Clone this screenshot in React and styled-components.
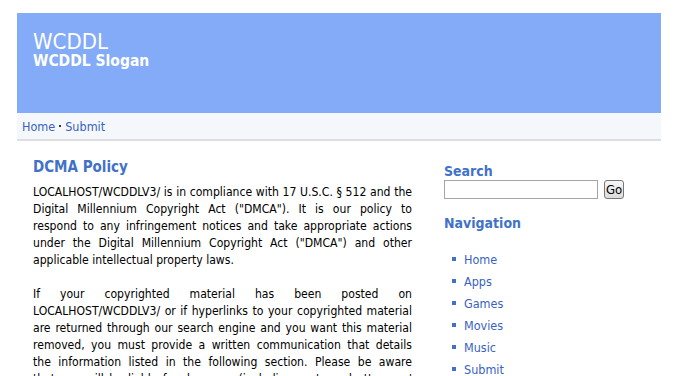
import styled, { createGlobalStyle } from "styled-components";

const GlobalStyle = createGlobalStyle`
  body {
    margin: 0;
    background: #fff;
    font-family: "DejaVu Sans Condensed", "DejaVu Sans", sans-serif;
    font-size: 12px;
    color: #000;
  }
`;

const Page = styled.div`
  width: 644px;
  margin: 13px 0 0 17px;
`;

const Header = styled.header`
  height: 100px;
  background: #84abf7;
  padding: 18px 16px 0;
  box-sizing: border-box;
  color: #fff;
`;

const SiteName = styled.div`
  font-size: 22px;
  line-height: 21px;
`;

const Slogan = styled.div`
  font-size: 15.5px;
  font-weight: bold;
  line-height: 18px;
`;

const NavBar = styled.nav`
  height: 26px;
  background: #f4f8fc;
  border-bottom: 2px solid #dedede;
  display: flex;
  align-items: center;
  padding-left: 5px;
  font-size: 12.5px;
`;

const NavLink = styled.a`
  color: #3a62c0;
  text-decoration: none;
`;

const Dot = styled.span`
  display: inline-block;
  width: 2px;
  height: 2px;
  background: #333;
  margin: 0 4px;
  vertical-align: middle;
`;

const Body = styled.div`
  display: flex;
  padding: 17px 0 0 16px;
  gap: 32px;
`;

const Main = styled.main`
  width: 379px;
`;

const Title = styled.h2`
  margin: 0 0 8px;
  font-size: 15px;
  font-weight: bold;
  color: #4272c8;
  line-height: 18px;
`;

const Para = styled.p`
  margin: 0 0 17px;
  line-height: 17px;
  font-size: 12.1px;
`;

// one justified line of the paragraph; the last line stays ragged
const Line = styled.span`
  display: block;
  white-space: nowrap;
  text-align: ${(p) => (p.$last ? "left" : "justify")};
  text-align-last: ${(p) => (p.$last ? "left" : "justify")};
`;

const Sidebar = styled.aside`
  flex: 1;
  padding-top: 5px;
`;

const SideTitle = styled.h3`
  margin: 0 0 1px;
  font-size: 14px;
  font-weight: bold;
  color: #4272c8;
  line-height: 16px;
`;

const SearchRow = styled.form`
  display: flex;
  align-items: center;
  gap: 6px;
  margin-bottom: 16px;
`;

const SearchInput = styled.input`
  width: 154px;
  height: 19px;
  box-sizing: border-box;
  border: 1px solid #a5a5a5;
  padding: 0 2px;
`;

const GoButton = styled.button`
  height: 19px;
  padding: 0 1px;
  font-family: "DejaVu Sans Condensed", sans-serif;
  font-size: 13px;
  border: 1px solid #777;
  border-radius: 3px;
  background: linear-gradient(#f6f6f6, #dcdcdc);
`;

const NavList = styled.ul`
  list-style: none;
  margin: 17px 0 0;
  padding: 0 0 0 8px;
`;

const NavItem = styled.li`
  display: flex;
  align-items: center;
  height: 22px;
  &::before {
    content: "";
    width: 4px;
    height: 4px;
    background: #4272c8;
    margin-right: 8px;
  }
`;

const SideLink = styled.a`
  color: #3a62c0;
  text-decoration: none;
  font-size: 12.5px;
`;

const navItems = ["Home", "Apps", "Games", "Movies", "Music", "Submit"];

const paragraphs = [
  [
    "LOCALHOST/WCDDLV3/ is in compliance with 17 U.S.C. § 512 and the",
    'Digital Millennium Copyright Act ("DMCA"). It is our policy to',
    "respond to any infringement notices and take appropriate actions",
    'under the Digital Millennium Copyright Act ("DMCA") and other',
    "applicable intellectual property laws.",
  ],
  [
    "If your copyrighted material has been posted on",
    "LOCALHOST/WCDDLV3/ or if hyperlinks to your copyrighted material",
    "are returned through our search engine and you want this material",
    "removed, you must provide a written communication that details",
    "the information listed in the following section. Please be aware",
    "that you will be liable for damages (including costs and attorneys'",
    "fees) if you misrepresent information listed on our site that is",
    "infringing on your copyrights.",
  ],
];

export default function App() {
  return (
    <>
      <GlobalStyle />
      <Page>
        <Header>
          <SiteName>WCDDL</SiteName>
          <Slogan>WCDDL Slogan</Slogan>
        </Header>
        <NavBar>
          <NavLink href="#">Home</NavLink>
          <Dot />
          <NavLink href="#">Submit</NavLink>
        </NavBar>
        <Body>
          <Main>
            <Title>DCMA Policy</Title>
            {paragraphs.map((lines, i) => (
              <Para key={i}>
                {lines.map((line, j) => (
                  <Line key={j} $last={j === lines.length - 1}>
                    {line}
                  </Line>
                ))}
              </Para>
            ))}
          </Main>
          <Sidebar>
            <SideTitle>Search</SideTitle>
            <SearchRow onSubmit={(e) => e.preventDefault()}>
              <SearchInput type="text" />
              <GoButton type="submit">Go</GoButton>
            </SearchRow>
            <SideTitle>Navigation</SideTitle>
            <NavList>
              {navItems.map((item) => (
                <NavItem key={item}>
                  <SideLink href="#">{item}</SideLink>
                </NavItem>
              ))}
            </NavList>
          </Sidebar>
        </Body>
      </Page>
    </>
  );
}
